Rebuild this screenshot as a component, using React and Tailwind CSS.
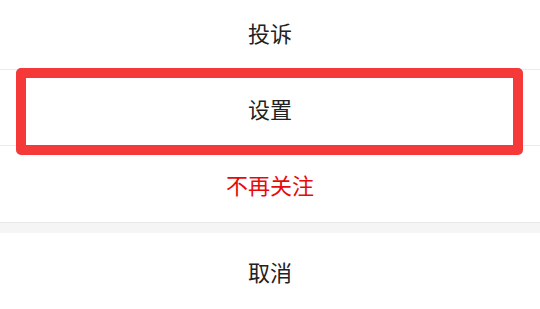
export default function App() {
  const rowText = "flex h-[76px] items-center justify-center text-[22px] leading-none";
  return (
    <div
      className="relative h-[309px] w-[540px] overflow-hidden bg-white"
      style={{ fontFamily: '"Noto Sans CJK SC", "Noto Sans", sans-serif' }}
    >
      <div className="-mt-[6px]">
        <div className={`${rowText} border-b border-[#ebebeb] text-[#222]`}>投诉</div>
        <div className={`${rowText} border-b border-[#ebebeb] text-[#222]`}>设置</div>
        <div className={`${rowText} text-[#e60a0a]`}>不再关注</div>
        <div className="h-[11px] border-t border-[#e8e8e8] bg-[#f5f5f5]" />
        <div className={`${rowText} text-[#222]`}>取消</div>
      </div>
      <div className="absolute left-[16px] top-[68px] h-[87px] w-[507px] rounded-[5px] border-[10px] border-[#f53838]" />
    </div>
  );
}
